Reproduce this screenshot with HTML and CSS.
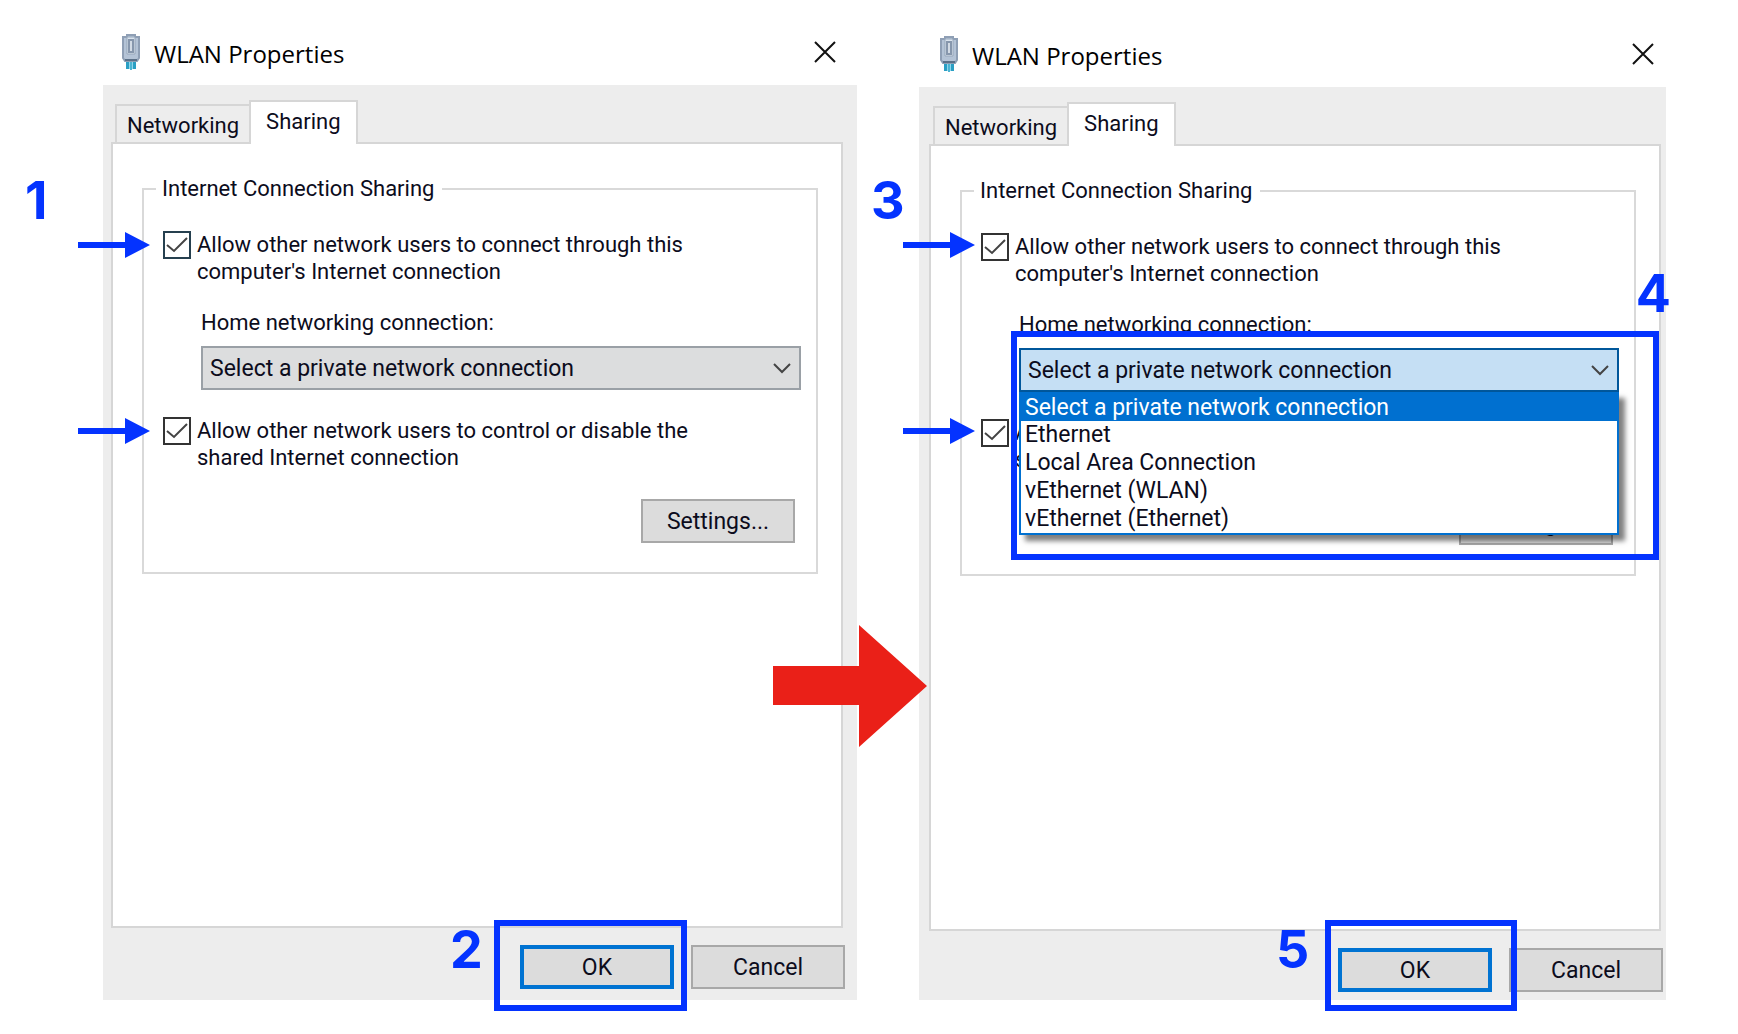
FILE: index.html
```html
<!DOCTYPE html>
<html lang="en">
<head>
    <meta charset="UTF-8">
    <meta name="viewport" content="width=device-width, initial-scale=1.0">
    <title>WLAN Properties - Internet Connection Sharing</title>
    <link rel="stylesheet" href="styles.css">
</head>
<body>
    <!-- shared shapes -->
    <svg class="defs" aria-hidden="true">
        <symbol id="adapter" viewBox="0 0 20 36">
            <path d="M5 26h10v9H5z" fill="#8fd6ea"/>
            <path d="M5 26h3v9H5zM12 26h3v9h-3z" fill="#2a9fc4"/>
            <path d="M9 26h2v10H9z" fill="#4db4d2"/>
            <path d="M6 1h8v2h4v21l-2 3H4l-2-3V3h4z" fill="#b4c3d6" stroke="#8f9fb5" stroke-width="2"/>
            <path d="M4 25h12v2H4z" fill="#5b7088"/>
            <path d="M6 3h8v17H6z" fill="#dbe4ee" stroke="#98a8bb"/>
            <path d="M8 6h4v12H8z" fill="#d3dbe5" stroke="#8797ad" stroke-width="2"/>
        </symbol>
        <symbol id="cross" viewBox="0 0 22 22">
            <path d="M1 1l20 20M21 1L1 21" fill="none" stroke="#111" stroke-width="2"/>
        </symbol>
        <symbol id="tick" viewBox="0 0 28 28">
            <path d="M4 14l7 6L24 7" fill="none" stroke="#444" stroke-width="2"/>
        </symbol>
        <symbol id="chevron" viewBox="0 0 18 12">
            <path d="M1 2l8 8 8-8" fill="none" stroke="#444" stroke-width="2"/>
        </symbol>
        <symbol id="pointer" viewBox="0 0 72 26">
            <path d="M0 10h47V0l25 13-25 13V16H0z" fill="#0433ff"/>
        </symbol>
    </svg>

    <main class="steps">
        <section class="dialog dialog-before">
            <header class="titlebar">
                <svg class="adapter"><use href="#adapter"/></svg>
                <h1>WLAN Properties</h1>
                <button class="close" type="button" aria-label="Close"><svg><use href="#cross"/></svg></button>
            </header>
            <form class="body">
                <nav class="tabs">
                    <a class="tab" href="#networking">Networking</a>
                    <a class="tab active" href="#sharing">Sharing</a>
                </nav>
                <div class="panel">
                    <fieldset>
                        <legend>Internet Connection Sharing</legend>
                        <div class="option">
                            <svg class="pointer"><use href="#pointer"/></svg>
                            <b class="step step-1">1</b>
                            <span class="check focused">
                                <input type="checkbox" id="allow-1" checked>
                                <svg><use href="#tick"/></svg>
                            </span>
                            <label for="allow-1">Allow other network users to connect through this<br>computer's Internet connection</label>
                        </div>
                        <div class="home">
                            <label for="home-1">Home networking connection:</label>
                            <div class="combo">
                                <select id="home-1">
                                    <option>Select a private network connection</option>
                                    <option>Ethernet</option>
                                    <option>Local Area Connection</option>
                                    <option>vEthernet (WLAN)</option>
                                    <option>vEthernet (Ethernet)</option>
                                </select>
                                <svg class="chevron"><use href="#chevron"/></svg>
                            </div>
                        </div>
                        <div class="option">
                            <svg class="pointer"><use href="#pointer"/></svg>
                            <span class="check">
                                <input type="checkbox" id="control-1" checked>
                                <svg><use href="#tick"/></svg>
                            </span>
                            <label for="control-1">Allow other network users to control or disable the<br>shared Internet connection</label>
                        </div>
                        <button class="button settings" type="button">Settings...</button>
                    </fieldset>
                </div>
                <footer class="actions">
                    <div class="target">
                        <button class="button default" type="button">OK</button>
                        <span class="frame"></span>
                        <b class="step step-2">2</b>
                    </div>
                    <button class="button" type="button">Cancel</button>
                </footer>
            </form>
            <svg class="next" viewBox="0 0 154 122">
                <path d="M0 41h86V0l68 61-68 61V80H0z" fill="#ea2018"/>
            </svg>
        </section>

        <section class="dialog dialog-after">
            <header class="titlebar">
                <svg class="adapter"><use href="#adapter"/></svg>
                <h1>WLAN Properties</h1>
                <button class="close" type="button" aria-label="Close"><svg><use href="#cross"/></svg></button>
            </header>
            <form class="body">
                <nav class="tabs">
                    <a class="tab" href="#networking">Networking</a>
                    <a class="tab active" href="#sharing">Sharing</a>
                </nav>
                <div class="panel">
                    <fieldset>
                        <legend>Internet Connection Sharing</legend>
                        <div class="option">
                            <svg class="pointer"><use href="#pointer"/></svg>
                            <b class="step step-3">3</b>
                            <span class="check">
                                <input type="checkbox" id="allow-2" checked>
                                <svg><use href="#tick"/></svg>
                            </span>
                            <label for="allow-2">Allow other network users to connect through this<br>computer's Internet connection</label>
                        </div>
                        <div class="home">
                            <label for="home-2">Home networking connection:</label>
                            <div class="combo open">
                                <select id="home-2">
                                    <option>Select a private network connection</option>
                                    <option>Ethernet</option>
                                    <option>Local Area Connection</option>
                                    <option>vEthernet (WLAN)</option>
                                    <option>vEthernet (Ethernet)</option>
                                </select>
                                <svg class="chevron"><use href="#chevron"/></svg>
                                <ul class="list">
                                    <li class="selected">Select a private network connection</li>
                                    <li>Ethernet</li>
                                    <li>Local Area Connection</li>
                                    <li>vEthernet (WLAN)</li>
                                    <li>vEthernet (Ethernet)</li>
                                </ul>
                                <span class="frame"></span>
                                <b class="step step-4">4</b>
                            </div>
                        </div>
                        <div class="option">
                            <svg class="pointer"><use href="#pointer"/></svg>
                            <span class="check">
                                <input type="checkbox" id="control-2" checked>
                                <svg><use href="#tick"/></svg>
                            </span>
                            <label for="control-2">Allow other network users to control or disable the<br>shared Internet connection</label>
                        </div>
                        <button class="button settings" type="button">Settings...</button>
                    </fieldset>
                </div>
                <footer class="actions">
                    <div class="target">
                        <button class="button default" type="button">OK</button>
                        <span class="frame"></span>
                        <b class="step step-5">5</b>
                    </div>
                    <button class="button" type="button">Cancel</button>
                </footer>
            </form>
        </section>
    </main>
</body>
</html>
```
FILE: styles.css
```css
* {
    margin: 0;
    padding: 0;
    box-sizing: border-box;
}

body {
    font-family: Roboto, 'Liberation Sans', Arial, sans-serif;
    font-size: 22px;
    line-height: 27px;
    background: #fff;
    color: #0c0c1c;
}

button,
select {
    font: inherit;
    color: inherit;
}

.defs {
    position: absolute;
    width: 0;
    height: 0;
}

.steps {
    display: flex;
    gap: 62px;
    min-height: 100vh;
    padding: 0 72px 34px 103px;
}

/* dialog window */
.dialog {
    position: relative;
    display: flex;
    flex-direction: column;
}

.dialog-before {
    --left: 8px;
    --right: 14px;
    --footer: 72px;
    flex: 754 1 0;
}

.dialog-after {
    --left: 10px;
    --right: 5px;
    --footer: 69px;
    flex: 747 1 0;
    padding-top: 2px;
}

.titlebar {
    display: flex;
    align-items: center;
    height: 85px;
    padding: 22px calc(var(--right) + 7px) 0 calc(var(--left) + 10px);
}

.titlebar h1 {
    flex: 1;
    font-family: 'Open Sans', 'Noto Sans', sans-serif;
    font-size: 24px;
    font-weight: 400;
    color: #000;
}

.adapter {
    width: 20px;
    height: 36px;
    margin: 0 13px 4px 0;
}

.close {
    width: 22px;
    height: 22px;
    margin-bottom: 4px;
    border: 0;
    background: none;
}

.close svg {
    display: block;
    width: 22px;
    height: 22px;
}

.body {
    flex: 1;
    display: flex;
    flex-direction: column;
    padding: 15px var(--right) 0 var(--left);
    background: #ededed;
}

/* tabs */
.tabs {
    display: flex;
    align-items: flex-end;
    padding-left: 4px;
}

.tab {
    height: 38px;
    padding: 6px 10px 0;
    border: 2px solid #d6d6d6;
    border-width: 2px 0 0 2px;
    color: inherit;
    text-decoration: none;
}

.tab.active {
    z-index: 1;
    height: 44px;
    margin-bottom: -2px;
    padding: 6px 15px 0;
    border-width: 2px 2px 0;
    background: #fff;
}

.panel {
    flex: 1;
    padding: 31px 23px 0 29px;
    border: 2px solid #d6d6d6;
    background: #fff;
}

fieldset {
    display: flex;
    flex-direction: column;
    height: 399px;
    padding: 28px 21px 0 19px;
    border: 2px solid #d9d9d9;
}

legend {
    margin-left: -7px;
    padding: 0 8px 0 6px;
}

/* check boxes */
.option {
    position: relative;
    display: flex;
    gap: 6px;
}

.option label {
    padding-top: 1px;
}

.check {
    display: grid;
    width: 28px;
    height: 28px;
    margin-top: 1px;
}

.check input,
.check svg {
    grid-area: 1 / 1;
    width: 28px;
    height: 28px;
}

.check input {
    appearance: none;
    border: 2px solid #333;
    background: #fff;
}

.check.focused input {
    border-color: #26404f;
}

.check svg {
    pointer-events: none;
}

/* connection drop-down */
.home {
    display: flex;
    flex-direction: column;
    gap: 10px;
    padding: 24px 0 26px 38px;
}

.combo {
    position: relative;
    display: grid;
    align-items: center;
    margin-right: -6px;
    font-size: 23px;
}

.combo select {
    grid-area: 1 / 1;
    width: 100%;
    height: 44px;
    padding: 0 7px;
    appearance: none;
    border: 2px solid #9aa0a6;
    border-radius: 0;
    background: #dcddde;
}

.chevron {
    grid-area: 1 / 1;
    justify-self: end;
    width: 18px;
    height: 12px;
    margin-right: 10px;
    pointer-events: none;
}

.combo.open {
    z-index: 2;
}

.combo.open select {
    border-color: #00579b;
    background: #c5dff4;
}

.list {
    position: absolute;
    top: 44px;
    left: 0;
    right: 0;
    border: 2px solid #0070d0;
    border-top: 0;
    background: #fff;
    box-shadow: 6px 6px 5px rgba(0, 0, 0, 0.5);
    line-height: 28px;
    list-style: none;
}

.list li {
    padding-left: 4px;
}

.list .selected {
    height: 29px;
    padding-top: 2px;
    background: #0070d0;
    color: #fff;
}

/* buttons */
.button {
    width: 154px;
    height: 44px;
    border: 2px solid #a8a8a8;
    background: #dcdcdc;
    font-size: 23px;
}

.button.default {
    border: 4px solid #0073d2;
}

.settings {
    align-self: flex-end;
    margin-top: 28px;
}

.actions {
    display: flex;
    justify-content: flex-end;
    gap: 17px;
    height: var(--footer);
    margin-right: -2px;
    padding-top: 17px;
}

.target {
    position: relative;
}

/* blue and red markup over the dialogs */
.pointer {
    position: absolute;
    top: 2px;
    left: -85px;
    width: 72px;
    height: 26px;
}

.dialog-after .pointer {
    top: 0;
    left: -78px;
}

.frame {
    position: absolute;
    border: 6px solid #0433ff;
    pointer-events: none;
}

.target .frame {
    top: -25px;
    left: -26px;
    width: 193px;
    height: 91px;
}

.dialog-after .target .frame {
    top: -28px;
    left: -13px;
    width: 192px;
}

.combo .frame {
    top: -17px;
    left: -8px;
    right: -40px;
    height: 229px;
}

.step {
    position: absolute;
    font-family: Inter, 'Liberation Sans', Arial, sans-serif;
    font-size: 52px;
    line-height: 54px;
    color: #0433ff;
}

.step-1 {
    top: -56px;
    left: -138px;
}

.step-2 {
    top: -22px;
    left: -70px;
}

.step-3 {
    top: -58px;
    left: -110px;
}

.step-4 {
    top: -81px;
    right: -52px;
}

.step-5 {
    top: -25px;
    left: -62px;
}

.next {
    position: absolute;
    top: 625px;
    right: -70px;
    z-index: 3;
    width: 154px;
    height: 122px;
}
```
